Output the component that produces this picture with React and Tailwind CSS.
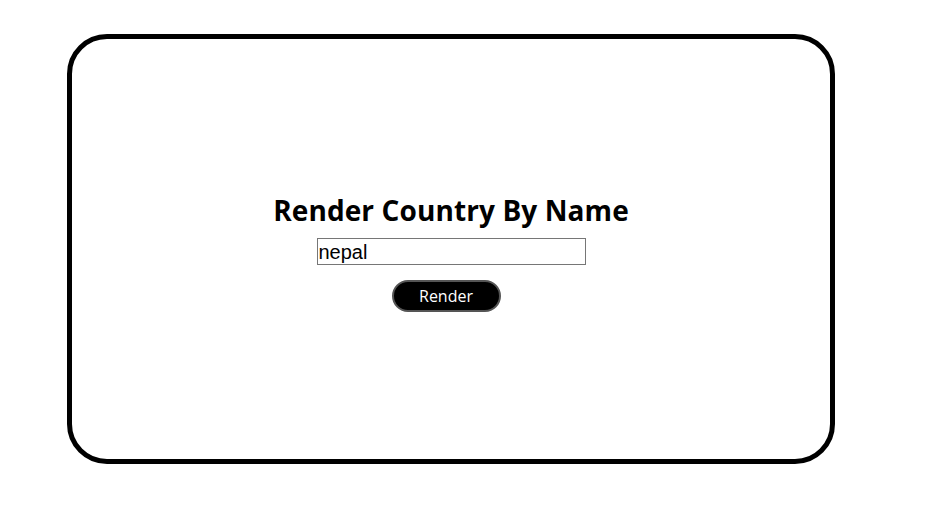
export default function App() {
  return (
    <div className="min-h-screen bg-white pt-[34px] pl-[67px]">
      <div className="w-[768px] h-[430px] border-[5px] border-black rounded-[40px] flex flex-col items-center pt-[154px]">
        <h1 className="font-['Open_Sans',sans-serif] text-[28px] font-bold text-black leading-[34px] tracking-[0.1px]">
          Render Country By Name
        </h1>
        <input
          type="text"
          defaultValue="nepal"
          className="mt-[11px] w-[269px] h-[27px] border border-[#767676] px-[1px] font-['Liberation_Sans',Arial,sans-serif] text-[20px] text-black outline-none"
        />
        <button className="mt-[15px] mr-[10px] w-[109px] h-[32px] rounded-full bg-black border-2 border-[#555] font-['Open_Sans',sans-serif] text-white text-[16px]">
          Render
        </button>
      </div>
    </div>
  );
}
